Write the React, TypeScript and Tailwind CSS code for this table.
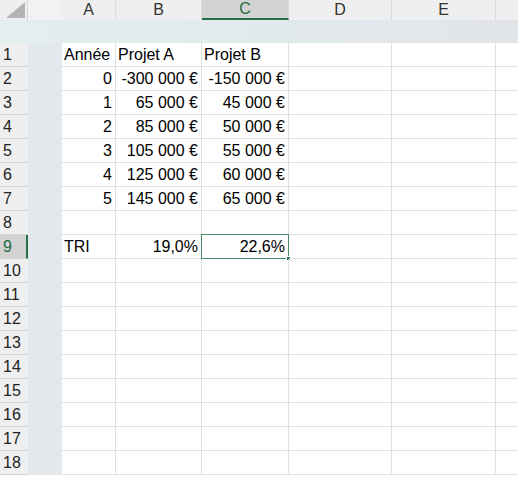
import React from "react";

const cols = [
  { key: "A", w: "w-[54px]" },
  { key: "B", w: "w-[86px]" },
  { key: "C", w: "w-[87px]" },
  { key: "D", w: "w-[103px]" },
  { key: "E", w: "w-[104px]" },
  { key: "F", w: "w-[60px]" },
];

type Cell = { v: string; align?: "l" | "r" };

const data: Record<number, Cell[]> = {
  1: [{ v: "Année" }, { v: "Projet A" }, { v: "Projet B" }],
  2: [{ v: "0", align: "r" }, { v: "-300 000 €", align: "r" }, { v: "-150 000 €", align: "r" }],
  3: [{ v: "1", align: "r" }, { v: "65 000 €", align: "r" }, { v: "45 000 €", align: "r" }],
  4: [{ v: "2", align: "r" }, { v: "85 000 €", align: "r" }, { v: "50 000 €", align: "r" }],
  5: [{ v: "3", align: "r" }, { v: "105 000 €", align: "r" }, { v: "55 000 €", align: "r" }],
  6: [{ v: "4", align: "r" }, { v: "125 000 €", align: "r" }, { v: "60 000 €", align: "r" }],
  7: [{ v: "5", align: "r" }, { v: "145 000 €", align: "r" }, { v: "65 000 €", align: "r" }],
  9: [{ v: "TRI" }, { v: "19,0%", align: "r" }, { v: "22,6%", align: "r" }],
};

const rows = Array.from({ length: 18 }, (_, i) => i + 1);

export default function App() {
  return (
    <div className="w-[518px] h-[478px] overflow-hidden bg-white text-black font-['Liberation_Sans',Arial,sans-serif] text-[16px]">
      {/* column headers */}
      <div className="flex h-[20px] bg-[#efefef]">
        <div className="w-[28px] shrink-0 border-r border-[#d6d6d6] flex items-end justify-end pr-[2px] pb-[2px]">
          <svg width="19" height="16" viewBox="0 0 19 16">
            <polygon points="0,16 19,16 19,0" fill="#b4b4b4" />
          </svg>
        </div>
        <div className="w-[34px] shrink-0 bg-[#f2f2f2]" />
        {cols.map((c) => (
          <div
            key={c.key}
            className={`${c.w} shrink-0 flex items-center justify-center border-r border-[#dadada] ${
              c.key === "C"
                ? "bg-[#d2d2d2] text-[#1e6b41] border-b-2 border-b-[#217346]"
                : "text-[#333]"
            }`}
          >
            {c.key === "F" ? "" : c.key}
          </div>
        ))}
      </div>

      {/* blank band */}
      <div className="h-[23px] bg-gradient-to-r from-[#e3eef0] to-[#e1e5ea]" />

      {rows.map((r) => {
        const cells = data[r] || [];
        return (
          <div key={r} className="flex h-[24px]">
            <div
              className={`w-[28px] shrink-0 flex items-center pl-[3px] border-b border-[#d4d4d4] ${
                r === 9
                  ? "bg-[#d2d2d2] text-[#1e6b41] border-r-2 border-r-[#217346]"
                  : "bg-[#efefef] text-[#222]"
              }`}
            >
              {r}
            </div>
            <div className="w-[34px] shrink-0 bg-[#e2e8eb]" />
            {cols.map((c, ci) => {
              const cell = cells[ci];
              const sel = r === 9 && c.key === "C";
              return (
                <div
                  key={c.key}
                  className={`${c.w} shrink-0 relative flex items-center whitespace-nowrap border-r border-b border-[#e1e1e1] ${
                    cell?.align === "r" ? "justify-end pr-[3px]" : "justify-start pl-[2px]"
                  }`}
                >
                  {cell?.v}
                  {sel && (
                    <>
                      <div className="absolute -left-px -top-px -right-px -bottom-px border border-[#4a8c64]" />
                      <div className="absolute -right-[3px] -bottom-[3px] w-[5px] h-[5px] bg-[#217346] border border-white" />
                    </>
                  )}
                </div>
              );
            })}
          </div>
        );
      })}
    </div>
  );
}
